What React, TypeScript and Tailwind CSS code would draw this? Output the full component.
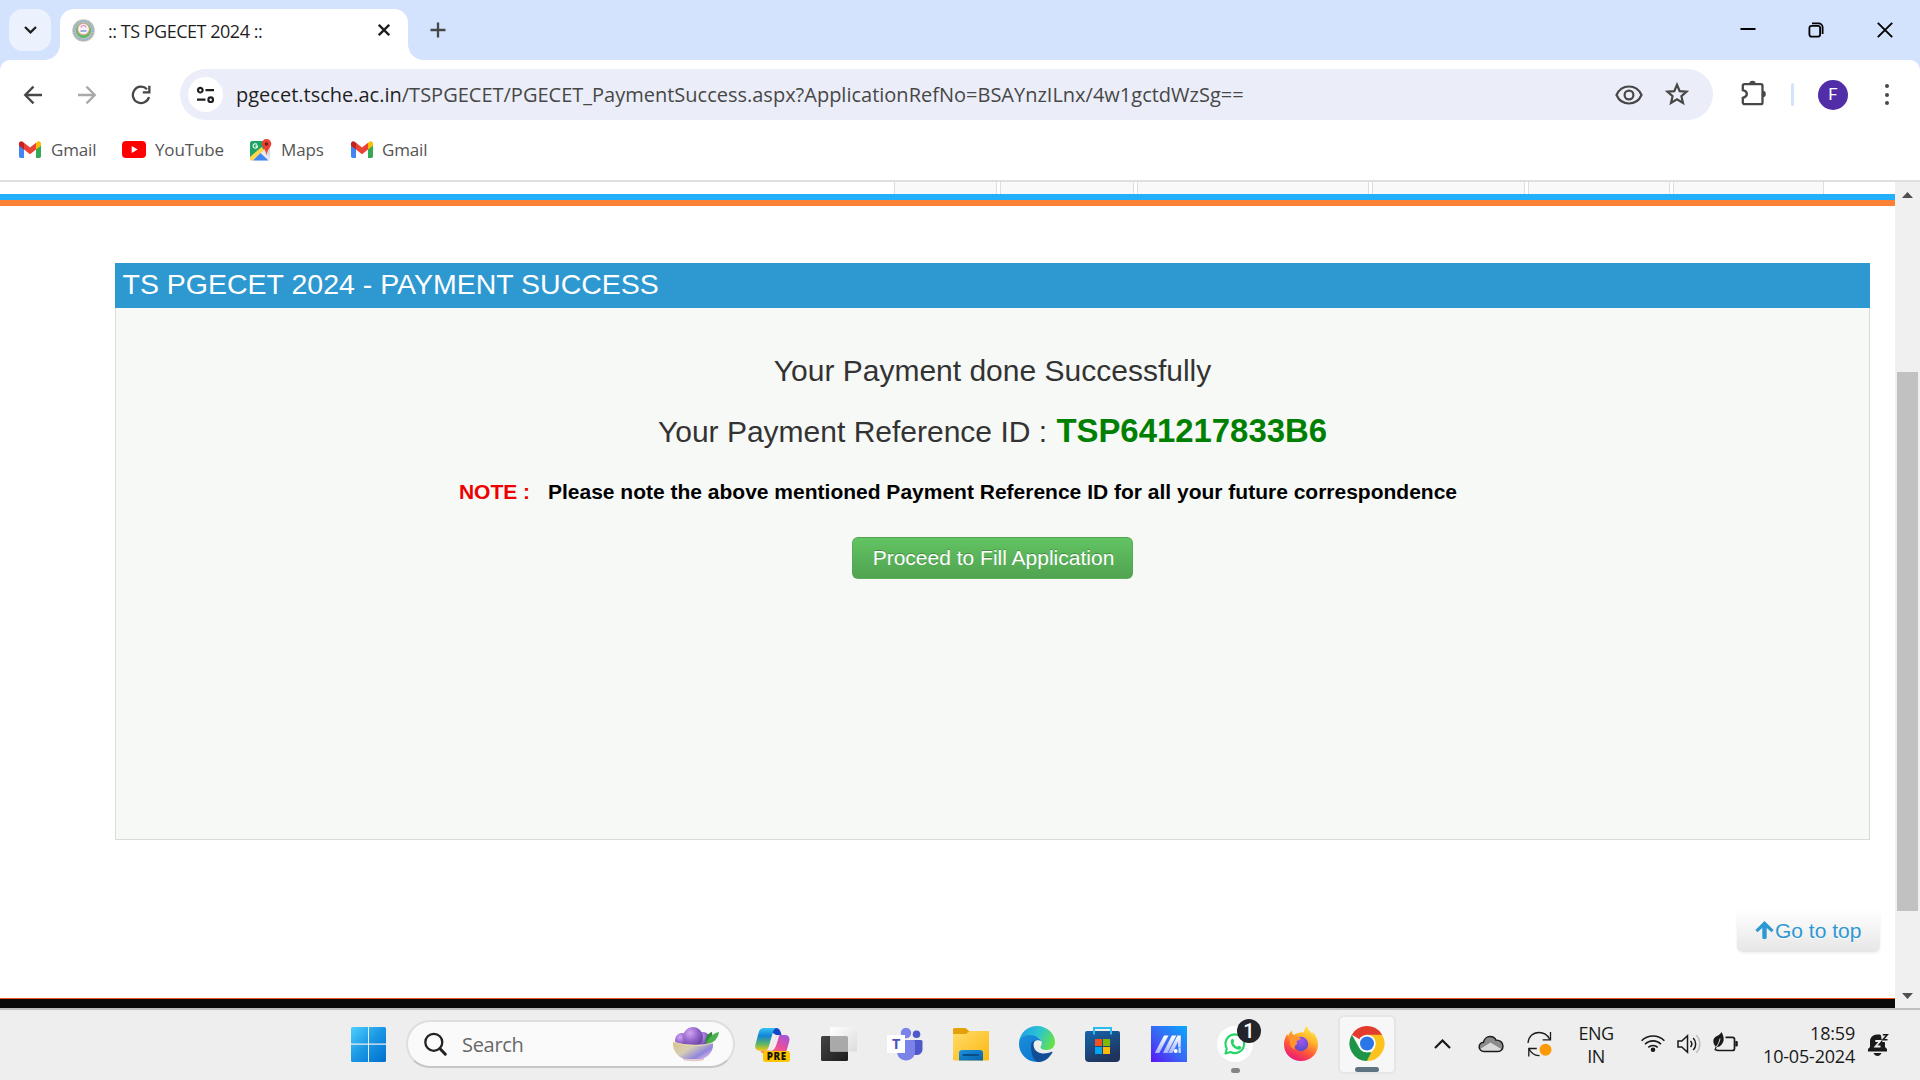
import React from "react";

function GmailIcon() {
  return (
    <svg className="h-[17px] w-[22px] shrink-0" viewBox="0 0 22 17">
      <path d="M0 4.5v10.8C0 16.2.7 17 1.6 17H5V7z" fill="#4285f4" />
      <path d="M17 7v10h3.4c.9 0 1.6-.8 1.6-1.7V4.500z" fill="#34a853" />
      <path d="M17 2v6.5l5-3.800V2.500C22 .3 19.500-.6 18 .9z" fill="#fbbc04" />
      <path d="M5 8.500V1.800l6 4.800 6-4.800v6.700L11 13.200z" fill="#ea4335" />
      <path d="M0 2.500v2.200l5 3.800V1.800L4 .9C2.500-.6 0 .3 0 2.500z" fill="#c5221f" />
    </svg>
  );
}

function YouTubeIcon() {
  return (
    <svg className="h-[17px] w-[24px] shrink-0" viewBox="0 0 24 17">
      <rect width="24" height="17" rx="4" fill="#f00" />
      <path d="M9.700 5v7l6-3.500z" fill="#fff" />
    </svg>
  );
}

function MapsIcon() {
  return (
    <svg className="h-[22px] w-[22px] shrink-0" viewBox="0 0 22 22">
      <rect x="0" y="2" width="20" height="19.500" rx="1.500" fill="#e8eaed" />
      <path d="M1.500 2H14v8.500L1 21 0 20V3.500z" fill="#1fa463" />
      <path d="M0 18 11.500 8 14 11 2.500 21.500H1C.4 21.500 0 21 0 20.500z" fill="#ffd54b" />
      <path d="M3 21.500 10.500 14l8 7.500z" fill="#4285f4" />
      <path d="M14 11l6 7.500V8z" fill="#d5d8dc" />
      <path d="M16.500 0a4.800 4.800 0 0 0-4.800 4.800c0 3.600 4.100 5 4.800 11.700.7-6.700 4.800-8.100 4.800-11.700A4.800 4.800 0 0 0 16.500 0z" fill="#ea4335" />
      <circle cx="16.500" cy="5" r="1.800" fill="#7b1d14" />
      <path d="M7 5.600a2.200 2.200 0 1 0 .5 1.500H5.500" fill="none" stroke="#fff" strokeWidth="1.100" />
    </svg>
  );
}

function Seal() {
  return (
    <svg className="h-[23px] w-[23px] shrink-0" viewBox="0 0 23 23">
      <circle cx="11.500" cy="11.500" r="11.300" fill="#cfc9a6" />
      <circle cx="11.500" cy="11.500" r="9.300" fill="none" stroke="#8fb0d8" strokeWidth="2.400" strokeDasharray="1.800 .7" />
      <circle cx="11.500" cy="11.500" r="7.600" fill="#5bb870" />
      <circle cx="11.500" cy="10.300" r="6.200" fill="#e6a57a" />
      <circle cx="11.500" cy="10" r="5.300" fill="#f8f3fa" />
      <path d="M8.800 8.500a2.800 2.800 0 0 1 5.400 0" fill="none" stroke="#e88fc0" strokeWidth="1.300" />
      <path d="M8.500 12h6" stroke="#9aa6dc" strokeWidth="1.800" />
    </svg>
  );
}

function TabStrip() {
  return (
    <div className="flex h-[60px] items-start bg-[#d3e3fd] pl-[9px] pt-[9px]">
      <div className="flex h-[42px] w-[42px] shrink-0 items-center justify-center rounded-[14px] bg-[#ebf2fe]">
        <svg className="h-[8px] w-[13px]" viewBox="0 0 13 8">
          <path d="M1 1l5.500 5.300L12 1" fill="none" stroke="#1f1f1f" strokeWidth="2.300" />
        </svg>
      </div>
      <div className="mt-[36px] ml-[-6px] h-[15px] w-[15px] shrink-0 bg-[radial-gradient(circle_at_0_0,transparent_14.500px,#fff_15px)]" />
      <div className="flex h-[51px] w-[348px] shrink-0 items-center rounded-t-[14px] bg-white pr-[18px] pb-[9px] pl-[12px]">
        <Seal />
        <span className="mt-[2px] ml-[13px] text-[18px] leading-[42px] tracking-[-0.48px] whitespace-pre text-[#1f1f1f]">:: TS PGECET 2024 ::</span>
        <svg className="ml-auto h-[12px] w-[12px]" viewBox="0 0 12 12">
          <path d="M.8.800l10.400 10.400M11.200.8.800 11.200" stroke="#1f1f1f" strokeWidth="2.300" />
        </svg>
      </div>
      <div className="mt-[36px] h-[15px] w-[15px] shrink-0 bg-[radial-gradient(circle_at_100%_0,transparent_14.500px,#fff_15px)]" />
      <svg className="mt-[13px] ml-[7px] h-[16px] w-[16px]" viewBox="0 0 16 16">
        <path d="M8 .5v15M.5 8h15" stroke="#474747" strokeWidth="2.300" />
      </svg>
      <svg className="mt-[12px] ml-auto h-[16px] w-[16px]" viewBox="0 0 16 16">
        <path d="M.5 8h15" stroke="#000" strokeWidth="2" />
      </svg>
      <svg className="mt-[13px] ml-[52px] h-[16px] w-[16px]" viewBox="0 0 16 16" fill="none" stroke="#000" strokeWidth="1.800">
        <rect x="1.400" y="3.900" width="10.700" height="10.700" rx="2" />
        <path d="M4 1.400h6.600a4 4 0 0 1 4 4V12" />
      </svg>
      <svg className="mt-[13px] mr-[27px] ml-[53px] h-[16px] w-[16px]" viewBox="0 0 16 16">
        <path d="M.8.800l14.400 14.400M15.200.8.800 15.200" stroke="#000" strokeWidth="1.900" />
      </svg>
    </div>
  );
}

function Toolbar() {
  return (
    <div className="bg-[#d3e3fd]">
      <div className="flex h-[69px] items-center rounded-t-[10px] bg-white pl-[23px]">
        <svg className="h-[20px] w-[20px] shrink-0" viewBox="0 0 20 20" fill="none" stroke="#474747" strokeWidth="2.300">
          <path d="M19 10H2.500M10.500 1.600 2.200 10l8.300 8.400" />
        </svg>
        <svg className="ml-[34px] h-[20px] w-[20px] shrink-0" viewBox="0 0 20 20" fill="none" stroke="#a9a9a9" strokeWidth="2.300">
          <path d="M1 10h16.500M9.500 1.600l8.300 8.400-8.300 8.400" />
        </svg>
        <svg className="ml-[34px] h-[20px] w-[20px] shrink-0" viewBox="0 0 20 20">
          <path d="M16 4.200a8.200 8.200 0 1 0 2 7.800" fill="none" stroke="#474747" strokeWidth="2.300" />
          <path d="M19.500.8v7.700h-7.700V6.200h5.400V.8z" fill="#474747" />
        </svg>
        <div className="ml-[29px] flex h-[51px] w-[1533px] shrink-0 items-center rounded-full bg-[#ebeef8] pl-[8px]">
          <div className="flex h-[35px] w-[35px] items-center justify-center rounded-full bg-white">
            <svg className="h-[18px] w-[19px]" viewBox="0 0 19 18" fill="none" stroke="#1f1f1f" strokeWidth="2.200">
              <circle cx="4.300" cy="4.200" r="2.300" />
              <path d="M9.500 4.200H18M1 13.700h8.500" />
              <circle cx="14.700" cy="13.700" r="2.300" />
            </svg>
          </div>
          <span className="ml-[13px] text-[20px] leading-[50px] whitespace-pre text-[#474747]">
            <span className="text-[#1f1f1f]">pgecet.tsche.ac.in</span>/TSPGECET/PGECET_PaymentSuccess.aspx?ApplicationRefNo=BSAYnzILnx/4w1gctdWzSg==
          </span>
          <svg className="ml-auto h-[20px] w-[28px]" viewBox="0 0 28 20" fill="none" stroke="#474747" strokeWidth="2.200">
            <path d="M1.500 10C3.800 4.800 8.500 1.500 14 1.500S24.200 4.800 26.500 10c-2.300 5.200-7 8.500-12.500 8.500S3.800 15.200 1.500 10z" />
            <circle cx="14" cy="10" r="4.400" />
          </svg>
          <svg className="mr-[24px] mb-[1px] ml-[22px] h-[24px] w-[24px]" viewBox="0 0 24 24" fill="none" stroke="#474747" strokeWidth="2.200">
            <path d="M12 2.700l2.700 6.400 6.900.6-5.200 4.500 1.600 6.800-6-3.600L6 21l1.600-6.800-5.200-4.500 6.900-.6z" />
          </svg>
        </div>
        <svg className="mb-[3px] ml-[27px] h-[26px] w-[26px] shrink-0" viewBox="0 0 26 26">
          <path d="M4.500 4.200h16.300c.9 0 1.700.8 1.700 1.700v16.500c0 .9-.8 1.700-1.700 1.700H4.500c-.9 0-1.700-.8-1.700-1.700v-4.600c5.400-1.500 5.400-6.200 0-7.600V5.900c0-.9.800-1.700 1.700-1.700z" fill="none" stroke="#474747" strokeWidth="2.300" />
          <path d="M9.300 4a3.200 3.200 0 0 1 6.400 0zM22.600 10.800a3.200 3.200 0 0 1 0 6.400z" fill="#474747" />
        </svg>
        <div className="ml-[25px] h-[23px] w-[3px] shrink-0 rounded-full bg-[#d3e3fd]" />
        <div className="mt-[1px] ml-[24px] flex h-[30px] w-[30px] shrink-0 items-center justify-center rounded-full bg-[#512da8] font-['Roboto'] text-[17px] text-white">F</div>
        <div className="ml-[37px] flex h-[21px] w-[4px] flex-col justify-between">
          <i className="h-[4px] w-[4px] rounded-full bg-[#474747]" />
          <i className="h-[4px] w-[4px] rounded-full bg-[#474747]" />
          <i className="h-[4px] w-[4px] rounded-full bg-[#474747]" />
        </div>
      </div>
    </div>
  );
}

function BookmarksBar() {
  return (
    <div className="flex h-[53px] items-start border-b-2 border-[#dfdfdf] bg-white pl-[19px] text-[17px] leading-[41px] tracking-[-0.15px] text-[#555]">
      <div className="flex h-[41px] w-[103px] items-center"><GmailIcon /><span className="ml-[10px]">Gmail</span></div>
      <div className="flex h-[41px] w-[128px] items-center"><YouTubeIcon /><span className="ml-[9px]">YouTube</span></div>
      <div className="flex h-[41px] w-[101px] items-center"><MapsIcon /><span className="ml-[9px]">Maps</span></div>
      <div className="flex h-[41px] items-center"><GmailIcon /><span className="ml-[9px]">Gmail</span></div>
    </div>
  );
}

function NavStub() {
  const box = "h-[12px] border-x border-[#ddd] bg-[#f9f9f9]";
  return (
    <div className="flex h-[12px] gap-[3px] pl-[894px]">
      <div className={box + " w-[103px]"} />
      <div className={box + " w-[134px]"} />
      <div className={box + " w-[232px]"} />
      <div className={box + " w-[153px]"} />
      <div className={box + " w-[142px]"} />
      <div className={box + " w-[151px]"} />
    </div>
  );
}

function Page() {
  return (
    <div className="flex h-[826px] w-[1895px] flex-col bg-white font-['Liberation_Sans',sans-serif]">
      <NavStub />
      <div className="h-[6px] bg-[#23b0fa]" />
      <div className="h-[6px] bg-[#fc8135]" />
      <div className="mt-[57px] ml-[115px] w-[1755px]">
        <h1 className="h-[45px] bg-[#2e98d1] pl-[7.500px] text-[28.500px] leading-[43px] text-white">TS PGECET 2024 - PAYMENT SUCCESS</h1>
        <div className="flex h-[532px] flex-col items-center border border-t-0 border-[#d9dcdb] bg-[#f7f9f7] pt-[33px] text-[#333]">
          <p className="h-[60px] text-[30px] leading-[59px]">Your Payment done Successfully</p>
          <p className="h-[60px] text-[30px] leading-[59px]">
            Your Payment Reference ID : <b className="ml-[1px] text-[32.900px] text-[#008000]">TSP641217833B6</b>
          </p>
          <p className="mt-[11px] mr-[69px] flex h-[40px] text-[21px] leading-[40px] font-bold whitespace-pre text-black">
            <span className="w-[89px] text-[#ee0000]">NOTE :</span>
            <span>Please note the above mentioned Payment Reference ID for all your future correspondence</span>
          </p>
          <button className="mt-[25px] h-[42px] w-[281px] rounded-[6px] border border-[#51a351]/60 bg-gradient-to-b from-[#62c462] to-[#51a351] pl-[2px] text-[21px] leading-[40px] text-white [text-shadow:0_-1px_0_rgba(0,0,0,0.25)]">
            Proceed to Fill Application
          </button>
        </div>
      </div>
      <div className="mt-[70px] mr-[15px] flex h-[42px] w-[143px] items-center self-end rounded-[6px] bg-gradient-to-b from-white to-[#e6e6e6] pl-[18px] text-[21px] leading-[42px] text-[#2e98d1] shadow-[0_1px_3px_rgba(0,0,0,0.08)] [text-shadow:0_1px_1px_rgba(255,255,255,0.75)]">
        <svg className="mr-[1px] mb-[2px] h-[18px] w-[19px]" viewBox="0 0 19 18">
          <path d="M9.500 0 18.600 9l-2 2.200-4.900-4.300V16.500q0 1.500-1.500 1.500H8.800q-1.500 0-1.500-1.500V6.900l-4.900 4.300-2-2.200z" fill="#2e98d1" />
        </svg>
        Go to top
      </div>
      <div className="mt-auto h-[10px] border-t border-[#f4511e] bg-[#0a0a0a]" />
    </div>
  );
}

function Scrollbar() {
  return (
    <div className="flex h-[826px] w-[25px] flex-col items-center bg-[#f0f0f0]">
      <svg className="mt-[10px] h-[6px] w-[11px]" viewBox="0 0 11 6"><path d="M5.500 0 11 6H0z" fill="#505050" /></svg>
      <div className="mt-[174px] h-[539px] w-[21px] bg-[#c1c1c1]" />
      <svg className="mt-[82px] h-[6px] w-[11px]" viewBox="0 0 11 6"><path d="M5.500 6 0 0h11z" fill="#505050" /></svg>
    </div>
  );
}

function WindowsIcon() {
  return (
    <svg className="h-[36px] w-[36px] shrink-0" viewBox="0 0 36 36">
      <defs>
        <linearGradient id="win" x1="0" y1="0" x2="35" y2="35" gradientUnits="userSpaceOnUse">
          <stop offset="0" stopColor="#4fd2ff" /><stop offset=".5" stopColor="#1b97e4" /><stop offset="1" stopColor="#0070cf" />
        </linearGradient>
      </defs>
      <path d="M1.500 1H17v16.500H0V2.500Q0 1 1.500 1zM18 1h15.500Q35 1 35 2.500v15H18zM0 18.700h17V36H1.500Q0 36 0 34.500zM18 18.700h17v15.800q0 1.500-1.500 1.500H18z" fill="url(#win)" />
    </svg>
  );
}

function BowlIcon() {
  return (
    <svg className="h-[35px] w-[47px]" viewBox="0 0 47 35">
      <defs>
        <linearGradient id="bowl" x1="0" y1="0" x2="1" y2=".7">
          <stop offset="0" stopColor="#d9c48e" /><stop offset=".45" stopColor="#d8cdb4" /><stop offset=".8" stopColor="#8e86dc" /><stop offset="1" stopColor="#d9b3e6" />
        </linearGradient>
        <radialGradient id="berry" cx=".35" cy=".3" r=".8">
          <stop offset="0" stopColor="#d2a6f0" /><stop offset=".5" stopColor="#9466cc" /><stop offset="1" stopColor="#5b3799" />
        </radialGradient>
      </defs>
      <circle cx="9" cy="13" r="7" fill="url(#berry)" />
      <circle cx="30" cy="12" r="7" fill="url(#berry)" />
      <circle cx="20" cy="10" r="10" fill="url(#berry)" />
      <path d="M33 17c-2-6 2-11 6-12 1 5-1 10-6 12z" fill="#2f8b3a" />
      <path d="M33 17c3-8 8-11 13-12-1 7-6 12-13 12z" fill="#4cb04f" />
      <path d="M10 30h21v3q-10 2.500-21 0z" fill="#e3c7cf" />
      <path d="M0 15q20 5 40 1c1 9-6 16-14 16H14C6 32-1 24 0 15z" fill="url(#bowl)" />
      <path d="M0 15q20 7 40 1" fill="none" stroke="#ecdcae" strokeWidth=".8" />
    </svg>
  );
}

function CopilotIcon() {
  return (
    <svg className="h-[36px] w-[36px]" viewBox="0 0 36 36">
      <defs>
        <linearGradient id="cpA" x1="0" y1="0" x2="0" y2="1">
          <stop offset="0" stopColor="#35c3f5" /><stop offset=".35" stopColor="#1284d4" /><stop offset=".7" stopColor="#5bb569" /><stop offset="1" stopColor="#f2c811" />
        </linearGradient>
        <linearGradient id="cpB" x1="1" y1="0" x2="0" y2="1">
          <stop offset="0" stopColor="#9a56e8" /><stop offset=".5" stopColor="#ea4f95" /><stop offset="1" stopColor="#ff8c50" />
        </linearGradient>
      </defs>
      <path d="M10 2h11c3 0 4 2 5 5l.5 2H21z" fill="#1546c8" />
      <path d="M25 9h5c4 0 5 3 4.300 6l-2.500 9c-.8 2.500-2.500 3.500-5 3.500H9c-2 0-3-1-3.500-3H14c2 0 3-1 4-4l2.500-8c.8-2.500 2.200-3.500 4.500-3.500z" fill="url(#cpB)" />
      <path d="M20.500 12c.8-2 2-3 4-3-2 4-3 15-8 15.700h-3.500c2.500 0 3.700-1.200 4.500-3.700z" fill="#f6ecf2" />
      <path d="M9.500 2H22c-2.500 0-3.500 2-4.300 5l-4 14c-.8 2.500-2 3.700-4.700 3.700H4.500c-3.500 0-5-2.500-4-6.200l3-11.500C4.500 3.500 6 2 9.500 2z" fill="url(#cpA)" />
      <rect x="8" y="25" width="27" height="11" rx="2.500" fill="#fcc603" />
      <text x="21.700" y="34" textAnchor="middle" fontFamily="Open Sans" fontWeight="800" fontSize="9.800" letterSpacing=".5" fill="#1a1300">PRE</text>
    </svg>
  );
}

function TaskViewIcon() {
  return (
    <svg className="h-[36px] w-[36px]" viewBox="0 0 36 36">
      <defs>
        <linearGradient id="tvA" x1="0" y1="0" x2="1" y2="1"><stop offset="0" stopColor="#454545" /><stop offset="1" stopColor="#1c1c1c" /></linearGradient>
        <linearGradient id="tvB" x1="0" y1="0" x2="1" y2="1"><stop offset="0" stopColor="#fff" /><stop offset="1" stopColor="#dcdcdc" /></linearGradient>
      </defs>
      <rect x="0" y="10" width="27" height="25" rx="1.500" fill="url(#tvA)" />
      <rect x="9" y="1" width="27" height="24.500" rx="1.500" fill="url(#tvB)" />
      <path d="M9 10h16.500Q27 10 27 11.500V25.500H10.500Q9 25.500 9 24z" fill="#a9a9a9" />
    </svg>
  );
}

function TeamsIcon() {
  return (
    <svg className="h-[36px] w-[36px]" viewBox="0 0 36 36">
      <circle cx="19" cy="7" r="5.200" fill="#7b83eb" />
      <circle cx="29.500" cy="8.300" r="3.800" fill="#5059c9" />
      <path d="M24 14h10q1.500 0 1.500 1.500V23c0 4-3 6-6 6s-5.500-2-5.500-6z" fill="#5059c9" />
      <path d="M11 14h15.500q1.500 0 1.500 1.500V25c0 6-4 9.500-9 9.500S10 31 10 25V15q0-1 1-1z" fill="#7b83eb" />
      <rect x="0" y="9" width="18" height="18" fill="#fff" />
      <text x="9.200" y="23.300" textAnchor="middle" fontFamily="Open Sans" fontWeight="700" fontSize="14.500" fill="#4b53bc">T</text>
    </svg>
  );
}

function FolderIcon() {
  return (
    <svg className="h-[36px] w-[36px]" viewBox="0 0 36 36">
      <defs>
        <linearGradient id="fdA" x1="0" y1="0" x2="1" y2="1"><stop offset="0" stopColor="#ffdb6b" /><stop offset="1" stopColor="#fbb910" /></linearGradient>
        <linearGradient id="fdB" x1="0" y1="0" x2="1" y2="1"><stop offset="0" stopColor="#1d93de" /><stop offset="1" stopColor="#0763ad" /></linearGradient>
      </defs>
      <path d="M0 3.500Q0 2 1.500 2h11l3.500 3h18.500Q36 5 36 6.500V12H0z" fill="#e3a008" />
      <path d="M0 8h13l3.500-3h18q1.500 0 1.500 1.500V33q0 1.500-1.500 1.500h-33Q0 34.500 0 33z" fill="url(#fdA)" />
      <path d="M6 34.500V27q0-3 3-3h18q3 0 3 3v7.500z" fill="url(#fdB)" />
      <path d="M10.500 29h14.500" stroke="#0a4d88" strokeWidth="2" strokeLinecap="round" />
    </svg>
  );
}

function EdgeIcon() {
  return (
    <svg className="h-[36px] w-[36px]" viewBox="0 0 36 36">
      <defs>
        <linearGradient id="egA" x1="0" y1=".3" x2="1" y2=".6"><stop offset="0" stopColor="#1fa2e4" /><stop offset=".5" stopColor="#2cc3d3" /><stop offset="1" stopColor="#66e345" /></linearGradient>
        <linearGradient id="egB" x1="0" y1="0" x2=".6" y2="1"><stop offset="0" stopColor="#1a8ed6" /><stop offset="1" stopColor="#0b78d4" /></linearGradient>
      </defs>
      <path d="M0 17C.5 7 8.500 0 18 0c10.500 0 18 8 18 16 0 5-3.500 8-8 8-4 0-6.500-1.300-6.500-2.800 0-1 1.300-1.700 1.300-4.200 0-3-3-6.500-8.300-6.500C7 10.500 1.500 13 0 17z" fill="url(#egA)" />
      <path d="M0 18C0 12 5 9 10.500 9c6 0 10.500 3 12 6.500-2-1.800-5.500-1.500-7.500.5-5 6 0 18 14.500 15.500C26 34.500 22 36 18 36 7.500 36 0 27.500 0 18z" fill="url(#egB)" />
      <path d="M12 20c0-3 1.500-5 4-6-2.500 4-1.500 9 2 11.500 4 2.800 10 2.500 14.500.3.800-.3 1.200.3.800 1C30 32.500 25 36 20 36c-5 0-8-7-8-16z" fill="#124e95" />
    </svg>
  );
}

function StoreIcon() {
  return (
    <svg className="h-[36px] w-[36px]" viewBox="0 0 36 36">
      <defs><linearGradient id="st" x1="0" y1="0" x2=".5" y2="1"><stop offset="0" stopColor="#1566ad" /><stop offset="1" stopColor="#1f335c" /></linearGradient></defs>
      <path d="M9 8V2h17v6" fill="none" stroke="#2bbcf0" strokeWidth="2" />
      <path d="M0 7q0-2 2-2h31q2 0 2 2v25q0 4-4 4H4q-4 0-4-4z" fill="url(#st)" />
      <path d="M9 5v3.500M26 5v3.500" stroke="#2bbcf0" strokeWidth="2" />
      <rect x="10" y="13" width="7" height="7" fill="#f25022" />
      <rect x="18" y="13" width="7" height="7" fill="#7fba00" />
      <rect x="10" y="21" width="7" height="7" fill="#00a4ef" />
      <rect x="18" y="21" width="7" height="7" fill="#ffb900" />
    </svg>
  );
}

function MyAsusIcon() {
  return (
    <svg className="h-[36px] w-[36px]" viewBox="0 0 36 36">
      <defs>
        <linearGradient id="as" x1="1" y1="0" x2="0" y2="1"><stop offset="0" stopColor="#0aa8fb" /><stop offset=".55" stopColor="#3a64f6" /><stop offset="1" stopColor="#5a15f2" /></linearGradient>
        <linearGradient id="asBar" x1="0" y1="0" x2="0" y2="1"><stop offset="0" stopColor="#fff" /><stop offset="1" stopColor="#a9b4fa" /></linearGradient>
      </defs>
      <rect width="36" height="36" fill="url(#as)" />
      <path d="M13 9.500h4.500L8.300 27H3.800z" fill="url(#asBar)" />
      <path d="M20.800 9.500h4.500L16.500 27H12z" fill="url(#asBar)" />
      <path d="M26.500 9.500h3.300v11.800H27v-5.500L22.500 25 21.300 27h-4z" fill="url(#asBar)" />
      <circle cx="24.700" cy="24.900" r="2" fill="#fff" />
      <path d="M27.500 21.500h2.300V27h-2.300z" fill="#c9dcff" />
    </svg>
  );
}

function WhatsAppIcon() {
  return (
    <div className="relative h-[36px] w-[36px] rounded-full bg-white">
      <svg className="h-[36px] w-[36px]" viewBox="0 0 36 36">
        <path d="M8.500 27.500l1.300-5A9.300 9.300 0 1 1 13.500 26z" fill="none" stroke="#25d366" strokeWidth="2.100" strokeLinejoin="round" />
        <path d="M14.500 13.200c.5-.7 1.500-.7 1.800 0l.9 2c.2.600-.6 1.300-.9 1.700.9 1.900 2.200 3.100 4 3.900.500-.4 1.100-1.400 1.700-1.100l2 1c.7.400.3 1.800-.5 2.400-1.600 1.200-4.500.300-6.700-1.600-2.400-2.200-4-5.900-2.300-8.300z" fill="#25d366" />
      </svg>
      <span className="absolute -top-[7px] left-[20px] flex h-[24px] w-[24px] items-center justify-center rounded-full bg-[#24252b] font-['Roboto'] text-[20px] font-medium text-white">1</span>
      <i className="absolute top-[42px] left-[14px] h-[5px] w-[9px] rounded-full bg-[#858585]" />
    </div>
  );
}

function FirefoxIcon() {
  return (
    <svg className="h-[36px] w-[36px]" viewBox="0 0 36 36">
      <defs>
        <linearGradient id="ff" x1=".8" y1="0" x2=".3" y2="1"><stop offset="0" stopColor="#fff044" /><stop offset=".35" stopColor="#ffb52c" /><stop offset=".65" stopColor="#ff5a36" /><stop offset="1" stopColor="#e8157c" /></linearGradient>
        <radialGradient id="ffg" cx=".5" cy=".3" r=".7"><stop offset="0" stopColor="#a156f0" /><stop offset="1" stopColor="#5a4bc8" /></radialGradient>
      </defs>
      <path d="M21 6.500C21 3.500 22.500 1 24 0c.5 3.500 3 5 5.500 8 .3-.8 0-1.800-.3-2.500C33 9 35 14 35 18.500 35 28 27.500 35 18 35S1 28 1 18.500c0-4 1.200-7.500 3.200-10.500.2 1 .6 1.500 1 2C6 7.500 8 5 9 4.800c0 2 .7 3.200 1.800 4.200C14 7 18 6 21 6.500z" fill="url(#ff)" />
      <circle cx="18" cy="18" r="7.200" fill="url(#ffg)" />
      <path d="M5 10c3-1.500 5-1 6.500 0 2 0 4 .8 6.500 2.500-1 1.800-4 1.800-4.500 3 .5 1 1 2 0 3-2 1-2.500 3-1.500 5-4-1-6-5-5-8.500z" fill="#ff9430" />
    </svg>
  );
}

function ChromeIcon() {
  return (
    <svg className="h-[36px] w-[36px]" viewBox="0 0 36 36">
      <path d="M18 18 2.400 9A18 18 0 0 1 33.600 9z" fill="#e33b2e" />
      <path d="M18 9h15.600A18 18 0 0 1 18 36l7.800-13.500z" fill="#fcc31e" />
      <path d="M2.400 9l7.800 13.500A9 9 0 0 0 18 27h5.200L18 36A18 18 0 0 1 2.400 9z" fill="#1e9446" />
      <path d="M25.800 22.500 18 36l-.2 0 4.500-9z" fill="#fcc31e" />
      <circle cx="18" cy="18" r="9" fill="#fff" />
      <circle cx="18" cy="18" r="7.200" fill="#2a76e9" />
    </svg>
  );
}

function Taskbar() {
  return (
    <div className="flex h-[72px] items-start border-t-2 border-[#bfbfbf] bg-[#eee] text-[#1a1a1a]">
      <div className="mt-[16px] ml-[351px] w-[36px] shrink-0"><WindowsIcon /></div>
      <div className="mt-[10px] ml-[19px] flex h-[48px] w-[329px] shrink-0 items-center rounded-full border-2 border-[#dedede] border-b-[#c6c6c6] bg-[#fafafa] pr-[13px] pl-[16px]">
        <svg className="h-[24px] w-[24px]" viewBox="0 0 24 24" fill="none" stroke="#222" strokeWidth="2.300">
          <circle cx="9.800" cy="10.300" r="8.500" /><path d="M15.800 16.500l5.500 5.700" strokeWidth="3" strokeLinecap="round" />
        </svg>
        <span className="mt-[2px] ml-[14px] text-[20px] leading-[42px] tracking-[-0.3px] text-[#686868]">Search</span>
        <span className="ml-auto"><BowlIcon /></span>
      </div>
      <div className="mt-[16px] ml-[20px] flex gap-[30px]">
        <CopilotIcon />
        <TaskViewIcon />
        <TeamsIcon />
        <FolderIcon />
        <EdgeIcon />
        <StoreIcon />
        <MyAsusIcon />
        <WhatsAppIcon />
        <FirefoxIcon />
      </div>
      <div className="mt-[5px] ml-[19px] flex h-[59px] w-[58px] shrink-0 flex-col items-center rounded-[6px] border-2 border-[#e5e5e5] bg-[#f7f7f7] pt-[9px]">
        <ChromeIcon />
        <i className="mt-[6px] h-[5px] w-[24px] shrink-0 rounded-full bg-[#5f7482]" />
      </div>
      <div className="flex h-[70px] items-center">
        <svg className="mb-[3px] ml-[38px] h-[10px] w-[17px]" viewBox="0 0 17 10"><path d="M1 9l7.500-7.500L16 9" fill="none" stroke="#1a1a1a" strokeWidth="2.200" /></svg>
        <svg className="mb-[2px] ml-[27px] h-[18px] w-[26px]" viewBox="0 0 26 18">
          <path d="M6 16.500a4.600 4.600 0 0 1-.5-9.200C6 4 8.800 1.500 12 1.500c2.700 0 5 1.400 6 3.700 3.700-.3 7 2.200 7 6 0 3-2.300 5.300-5 5.300z" fill="#8b8b8b" />
          <path d="M2 14l10.500-6.500L24 14.500c-1 1.300-2.300 2-4 2H6c-1.700 0-3-.8-4-2.500z" fill="#d9d9d9" />
          <path d="M6 16.500a4.600 4.600 0 0 1-.5-9.200C6 4 8.800 1.500 12 1.500c2.700 0 5 1.400 6 3.700 3.700-.3 7 2.200 7 6 0 3-2.300 5.300-5 5.300z" fill="none" stroke="#1a1a1a" strokeWidth="1.400" />
        </svg>
        <svg className="mb-[2px] ml-[23px] h-[27px] w-[25px]" viewBox="0 0 25 27">
          <path d="M1 12C1.500 5.500 6 1.500 12 1.500c4.500 0 8.500 2.500 10.500 6.500M23.500 1v7.800h-7.800M1.800 25.500v-8h8M2 17.800C4 22 8 24.800 12.500 24.500" fill="none" stroke="#1a1a1a" strokeWidth="1.300" />
          <circle cx="18.500" cy="18.800" r="6" fill="#fb9a06" />
        </svg>
        <div className="ml-[24px] flex w-[40px] flex-col items-center text-[18px] leading-[23px] tracking-[-0.5px]"><span>ENG</span><span>IN</span></div>
        <svg className="mb-[4px] ml-[25px] h-[18px] w-[24px]" viewBox="0 0 24 18" fill="none" stroke="#1a1a1a" strokeWidth="1.600">
          <path d="M.6 6.800a16 16 0 0 1 22.800 0M4 10.200a11.200 11.200 0 0 1 16 0M7.300 13.400a6.600 6.600 0 0 1 9.400 0" />
          <circle cx="12" cy="15.700" r="1.500" fill="#1a1a1a" />
        </svg>
        <svg className="mb-[3px] ml-[12px] h-[20px] w-[25px]" viewBox="0 0 25 20" fill="none" stroke="#1a1a1a" strokeWidth="1.500">
          <path d="M1 7h3.800L10.500 1.800v16.400L4.800 13H1zM13.500 7a4.500 4.500 0 0 1 0 6M16.200 4a8.500 8.500 0 0 1 0 12" />
          <path d="M19.200 1.200a12.500 12.500 0 0 1 0 17.600" stroke="#bdbdbd" />
        </svg>
        <svg className="mb-[6px] ml-[11px] h-[20px] w-[25px]" viewBox="0 0 25 20">
          <path d="M12.500 5.300h7q2 0 2 2v9.200q0 2-2 2H5.500q-2 0-3-1" fill="none" stroke="#1a1a1a" strokeWidth="1.700" />
          <path d="M22.300 9h1.500q1 0 1 1v3.500q0 1-1 1h-1.500z" fill="#1a1a1a" />
          <path d="M8.500 0C10.500 3.500 13 10 6.500 14.500L3.800 15l-1.500 3.500-1-.4 1.400-3.500C-.5 11.500-.5 6.500 3 4.500 5 3.500 7.500 2.500 8.500 0z" fill="#1a1a1a" />
          <path d="M7 6.500C6.500 10 5 12.500 3.300 15" fill="none" stroke="#eee" strokeWidth=".9" />
        </svg>
        <div className="mb-[1px] ml-[21px] flex w-[96px] flex-col items-end text-[18px] leading-[23px] tracking-[-0.2px]"><span>18:59</span><span>10-05-2024</span></div>
        <svg className="ml-[13px] h-[24px] w-[21px]" viewBox="0 0 21 24">
          <path d="M0 18.500V16l2-2V8.500C2 4.500 5 1.500 9 1.500h3l3 3.500 2 5v4l2 2v2.500zM5.500 20h8c-.8 2-2.300 3-4 3s-3.200-1-4-3z" fill="#1a1a1a" />
          <path d="M13.300 0H21v9h-6.500L13.300 5z" fill="#eee" />
          <path d="M7.300 8h4.900l-4.700 5.500h5" fill="none" stroke="#eee" strokeWidth="1.800" />
          <path d="M14.800 1.800h4.400l-4.200 5h4.500" fill="none" stroke="#1a1a1a" strokeWidth="1.600" />
        </svg>
      </div>
    </div>
  );
}

export default function App() {
  return (
    <div className="flex h-[1080px] w-[1920px] flex-col overflow-hidden bg-white font-['Open_Sans','Noto_Sans',sans-serif]">
      <TabStrip />
      <Toolbar />
      <BookmarksBar />
      <div className="flex h-[826px]">
        <Page />
        <Scrollbar />
      </div>
      <Taskbar />
    </div>
  );
}
